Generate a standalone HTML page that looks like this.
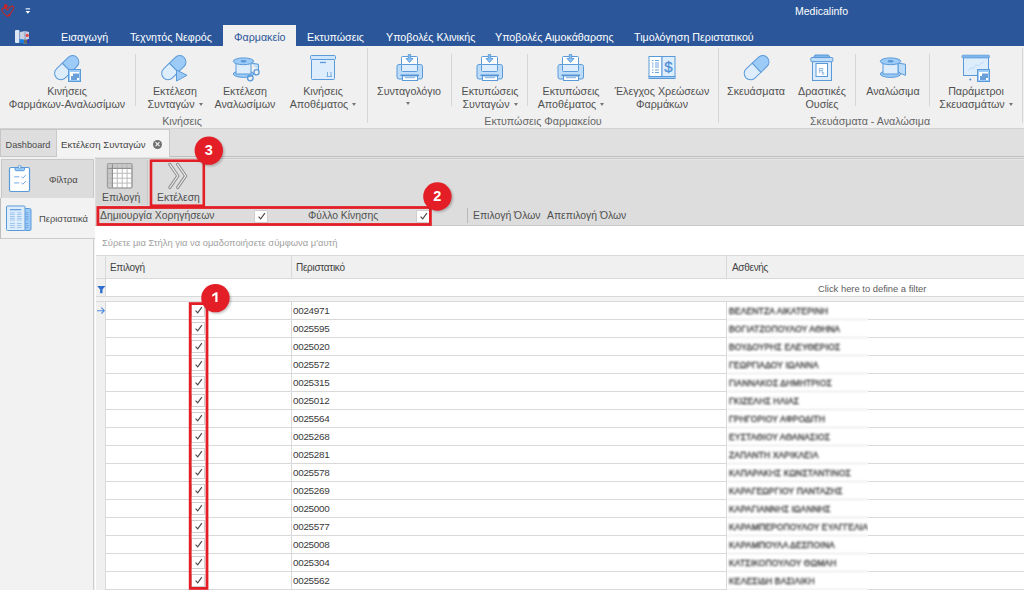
<!DOCTYPE html><html><head><meta charset="utf-8"><style>
*{margin:0;padding:0;box-sizing:border-box}
html,body{width:1024px;height:590px;overflow:hidden;background:#f0f0f0;font-family:"Liberation Sans",sans-serif;position:relative}
.a{position:absolute;white-space:nowrap}
.t{font-size:10.7px;color:#505050;line-height:12px}
.g{font-size:10.7px;color:#666;line-height:12px}
.d{font-size:9.9px;color:#3a3a3a;line-height:11px;letter-spacing:-0.3px}
.sep{position:absolute;width:1px;background:#d6d6d6}
svg{position:absolute;left:0;top:0}
.ar{display:inline-block;width:0;height:0;border-left:2.5px solid transparent;border-right:2.5px solid transparent;border-top:3px solid #777;vertical-align:middle;margin-left:4px;position:relative;top:-1px}
.cb{position:absolute;width:14px;height:13px;background:#fff;border:1px solid #cfcfcf}
.hl{position:absolute;height:1px;background:#d9d9d9}
.vl{position:absolute;width:1px;background:#d9d9d9}
</style></head><body><div class="a" style="left:0;top:0;width:1024px;height:46px;background:#2b579a"></div><div class="a" style="left:795px;top:5px;font-size:10.5px;color:#fff;line-height:12px">Medicalinfo</div><div class="a t" style="left:61px;top:31px;color:#fff">Εισαγωγή</div><div class="a t" style="left:130px;top:31px;color:#fff">Τεχνητός Νεφρός</div><div class="a t" style="left:307px;top:31px;color:#fff">Εκτυπώσεις</div><div class="a t" style="left:386px;top:31px;color:#fff">Υποβολές Κλινικής</div><div class="a t" style="left:495px;top:31px;color:#fff">Υποβολές Αιμοκάθαρσης</div><div class="a t" style="left:634px;top:31px;color:#fff">Τιμολόγηση Περιστατικού</div><div class="a" style="left:223px;top:25px;width:73px;height:22px;background:#f0f0f0"></div><div class="a t" style="left:234px;top:31px;color:#2b579a">Φαρμακείο</div><div class="a" style="left:0;top:128px;width:1024px;height:1px;background:#d2d2d2"></div><div class="a t" style="left:7px;width:120px;text-align:center;top:85px">Κινήσεις</div><div class="a t" style="left:7px;width:120px;text-align:center;top:98px">Φαρμάκων-Αναλωσίμων</div><div class="a t" style="left:115px;width:120px;text-align:center;top:85px">Εκτέλεση</div><div class="a t" style="left:115px;width:120px;text-align:center;top:98px">Συνταγών<span class="ar"></span></div><div class="a t" style="left:185px;width:120px;text-align:center;top:85px">Εκτέλεση</div><div class="a t" style="left:185px;width:120px;text-align:center;top:98px">Αναλωσίμων</div><div class="a t" style="left:263px;width:120px;text-align:center;top:85px">Κινήσεις</div><div class="a t" style="left:263px;width:120px;text-align:center;top:98px">Αποθέματος<span class="ar"></span></div><div class="a t" style="left:349px;width:120px;text-align:center;top:85px">Συνταγολόγιο</div><div class="a" style="left:406px;top:102px;width:0;height:0;border-left:2.5px solid transparent;border-right:2.5px solid transparent;border-top:3px solid #777"></div><div class="a t" style="left:430px;width:120px;text-align:center;top:85px">Εκτυπώσεις</div><div class="a t" style="left:430px;width:120px;text-align:center;top:98px">Συνταγών<span class="ar"></span></div><div class="a t" style="left:511px;width:120px;text-align:center;top:85px">Εκτυπώσεις</div><div class="a t" style="left:511px;width:120px;text-align:center;top:98px">Αποθέματος<span class="ar"></span></div><div class="a t" style="left:602px;width:120px;text-align:center;top:85px">Έλεγχος Χρεώσεων</div><div class="a t" style="left:602px;width:120px;text-align:center;top:98px">Φαρμάκων</div><div class="a t" style="left:696px;width:120px;text-align:center;top:85px">Σκευάσματα</div><div class="a t" style="left:762px;width:120px;text-align:center;top:85px">Δραστικές</div><div class="a t" style="left:762px;width:120px;text-align:center;top:98px">Ουσίες</div><div class="a t" style="left:833px;width:120px;text-align:center;top:85px">Αναλώσιμα</div><div class="a t" style="left:916px;width:120px;text-align:center;top:85px">Παράμετροι</div><div class="a t" style="left:916px;width:120px;text-align:center;top:98px">Σκευασμάτων<span class="ar"></span></div><div class="sep" style="left:135px;top:54px;height:52px"></div><div class="sep" style="left:451px;top:54px;height:52px"></div><div class="sep" style="left:527px;top:54px;height:52px"></div><div class="sep" style="left:855px;top:54px;height:52px"></div><div class="sep" style="left:929px;top:54px;height:52px"></div><div class="sep" style="left:367px;top:48px;height:75px"></div><div class="sep" style="left:718px;top:48px;height:75px"></div><div class="sep" style="left:1022px;top:48px;height:75px"></div><div class="a g" style="left:132px;width:100px;text-align:center;top:115px">Κινήσεις</div><div class="a g" style="left:443px;width:200px;text-align:center;top:115px">Εκτυπώσεις Φαρμακείου</div><div class="a g" style="left:770px;width:200px;text-align:center;top:115px">Σκευάσματα - Αναλώσιμα</div><div class="a" style="left:0;top:129px;width:1024px;height:28px;background:#e0e0e0"></div><div class="a" style="left:0;top:129px;width:57px;height:28px;background:#dedede;border:1px solid #c6c6c6"></div><div class="a" style="left:5.5px;top:139px;font-size:9.2px;color:#4a4a4a;line-height:12px">Dashboard</div><div class="a" style="left:56px;top:129px;width:114px;height:29px;background:#f3f3f3;border:1px solid #c9c9c9;border-bottom:none"></div><div class="a" style="left:61px;top:139px;font-size:9.6px;color:#444;line-height:12px">Εκτέλεση Συνταγών</div><div class="a" style="left:153px;top:139.6px;width:9px;height:9px;border-radius:50%;background:#707070"></div><div class="a" style="left:0;top:157px;width:1024px;height:433px;background:#f0f0f0"></div><div class="a" style="left:1px;top:159px;width:93px;height:40px;background:#dcdcdc;border:1px solid #c8c8c8"></div><div class="a" style="left:49px;top:173.8px;font-size:9.4px;color:#4a4a4a;line-height:12px">Φίλτρα</div><div class="a" style="left:0;top:198px;width:95px;height:41px;background:#f2f2f2;border-left:1px solid #bdbdbd;border-bottom:1px solid #cbcbcb"></div><div class="a" style="left:39px;top:212.8px;font-size:9.4px;color:#4a4a4a;line-height:12px">Περιστατικά</div><div class="a" style="left:93px;top:238px;width:1px;height:352px;background:#cfcfcf"></div><div class="a" style="left:95px;top:157px;width:1px;height:433px;background:#c2c2c2"></div><div class="a" style="left:0;top:239px;width:93px;height:351px;background:#f2f2f2"></div><div class="a" style="left:95px;top:157px;width:929px;height:69px;background:#dddddd"></div><div class="a" style="left:170px;top:156px;width:854px;height:1px;background:#bebebe"></div><div class="a" style="left:95px;top:157px;width:929px;height:1px;background:#e4e4e4"></div><div class="a" style="left:95px;top:158px;width:929px;height:1px;background:#c8c8c8"></div><div class="a" style="left:95px;top:159px;width:929px;height:1px;background:#e6e6e6"></div><div class="a" style="left:96px;top:159px;width:52px;height:46px;background:#d7d7d7"></div><div class="vl" style="left:147px;top:160px;height:45px;background:#c8c8c8"></div><div class="a t" style="left:102px;top:192px;font-size:10.4px">Επιλογή</div><div class="a t" style="left:157px;top:192px;font-size:10.4px">Εκτέλεση</div><div class="a t" style="left:100px;top:210px;font-size:10.4px">Δημιουργία Χορηγήσεων</div><div class="a t" style="left:308px;top:210px;font-size:10.4px">Φύλλο Κίνησης</div><div class="cb" style="left:254px;top:210px"></div><div class="cb" style="left:416px;top:210px"></div><div class="vl" style="left:467px;top:208px;height:15px;background:#b8b8b8"></div><div class="a t" style="left:473px;top:210px;font-size:10.4px">Επιλογή Όλων</div><div class="a t" style="left:547px;top:210px;font-size:10.4px">Απεπιλογή Όλων</div><div class="a" style="left:95px;top:225px;width:929px;height:1px;background:#c8c8c8"></div><div class="a" style="left:95px;top:226px;width:929px;height:364px;background:#fff"></div><div class="a" style="left:102px;top:237px;font-size:9.4px;color:#a0a0a0;line-height:11px">Σύρετε μια Στήλη για να ομαδοποιήσετε σύμφωνα μ'αυτή</div><div class="a" style="left:96px;top:255px;width:928px;height:24px;background:#f0f0f0;border-top:1px solid #d9d9d9;border-bottom:1px solid #d9d9d9"></div><div class="a" style="left:96px;top:279px;width:10px;height:311px;background:#f0f0f0"></div><div class="vl" style="left:105px;top:256px;height:334px"></div><div class="vl" style="left:291px;top:256px;height:22px"></div><div class="vl" style="left:726px;top:256px;height:22px"></div><div class="a" style="left:110px;top:261.5px;font-size:10px;letter-spacing:-0.3px;color:#444;line-height:11px">Επιλογή</div><div class="a" style="left:296px;top:261.5px;font-size:10px;letter-spacing:-0.3px;color:#444;line-height:11px">Περιστατικό</div><div class="a" style="left:732px;top:261.5px;font-size:10px;letter-spacing:-0.3px;color:#444;line-height:11px">Ασθενής</div><div class="a" style="left:818px;top:283px;font-size:9.4px;color:#5c5c5c;line-height:11px">Click here to define a filter</div><div class="a" style="left:96px;top:296px;width:928px;height:6px;background:#f3f3f3;border-top:1px solid #d9d9d9;border-bottom:1px solid #d9d9d9"></div><div class="hl" style="left:106px;top:319px;width:621px"></div><div class="hl" style="left:868px;top:319px;width:156px"></div><div class="a d" style="left:293px;top:304.6px">0024971</div><div class="cb" style="left:191px;top:304px"></div><div class="hl" style="left:106px;top:337px;width:621px"></div><div class="hl" style="left:868px;top:337px;width:156px"></div><div class="a d" style="left:293px;top:322.6px">0025595</div><div class="cb" style="left:191px;top:322px"></div><div class="hl" style="left:106px;top:355px;width:621px"></div><div class="hl" style="left:868px;top:355px;width:156px"></div><div class="a d" style="left:293px;top:340.6px">0025020</div><div class="cb" style="left:191px;top:340px"></div><div class="hl" style="left:106px;top:373px;width:621px"></div><div class="hl" style="left:868px;top:373px;width:156px"></div><div class="a d" style="left:293px;top:358.6px">0025572</div><div class="cb" style="left:191px;top:358px"></div><div class="hl" style="left:106px;top:391px;width:621px"></div><div class="hl" style="left:868px;top:391px;width:156px"></div><div class="a d" style="left:293px;top:376.6px">0025315</div><div class="cb" style="left:191px;top:376px"></div><div class="hl" style="left:106px;top:409px;width:621px"></div><div class="hl" style="left:868px;top:409px;width:156px"></div><div class="a d" style="left:293px;top:394.6px">0025012</div><div class="cb" style="left:191px;top:394px"></div><div class="hl" style="left:106px;top:427px;width:621px"></div><div class="hl" style="left:868px;top:427px;width:156px"></div><div class="a d" style="left:293px;top:412.6px">0025564</div><div class="cb" style="left:191px;top:412px"></div><div class="hl" style="left:106px;top:445px;width:621px"></div><div class="hl" style="left:868px;top:445px;width:156px"></div><div class="a d" style="left:293px;top:430.6px">0025268</div><div class="cb" style="left:191px;top:430px"></div><div class="hl" style="left:106px;top:463px;width:621px"></div><div class="hl" style="left:868px;top:463px;width:156px"></div><div class="a d" style="left:293px;top:448.6px">0025281</div><div class="cb" style="left:191px;top:448px"></div><div class="hl" style="left:106px;top:481px;width:621px"></div><div class="hl" style="left:868px;top:481px;width:156px"></div><div class="a d" style="left:293px;top:466.6px">0025578</div><div class="cb" style="left:191px;top:466px"></div><div class="hl" style="left:106px;top:499px;width:621px"></div><div class="hl" style="left:868px;top:499px;width:156px"></div><div class="a d" style="left:293px;top:484.6px">0025269</div><div class="cb" style="left:191px;top:484px"></div><div class="hl" style="left:106px;top:517px;width:621px"></div><div class="hl" style="left:868px;top:517px;width:156px"></div><div class="a d" style="left:293px;top:502.6px">0025000</div><div class="cb" style="left:191px;top:502px"></div><div class="hl" style="left:106px;top:535px;width:621px"></div><div class="hl" style="left:868px;top:535px;width:156px"></div><div class="a d" style="left:293px;top:520.6px">0025577</div><div class="cb" style="left:191px;top:520px"></div><div class="hl" style="left:106px;top:553px;width:621px"></div><div class="hl" style="left:868px;top:553px;width:156px"></div><div class="a d" style="left:293px;top:538.6px">0025008</div><div class="cb" style="left:191px;top:538px"></div><div class="hl" style="left:106px;top:571px;width:621px"></div><div class="hl" style="left:868px;top:571px;width:156px"></div><div class="a d" style="left:293px;top:556.6px">0025304</div><div class="cb" style="left:191px;top:556px"></div><div class="hl" style="left:106px;top:589px;width:621px"></div><div class="hl" style="left:868px;top:589px;width:156px"></div><div class="a d" style="left:293px;top:574.6px">0025562</div><div class="cb" style="left:191px;top:574px"></div><div class="vl" style="left:291px;top:302px;height:288px"></div><div class="vl" style="left:726px;top:302px;height:288px"></div><div class="a" style="left:727px;top:302px;width:141px;height:288px;overflow:hidden;background:#fff"><div style="position:absolute;left:0;top:0;width:160px;height:300px;filter:blur(1.25px)"><div style="position:absolute;left:0;top:17px;width:160px;height:1px;background:#e0e0e0"></div><div style="position:absolute;left:2px;top:4px;font-size:8.5px;line-height:11px;color:#333;white-space:nowrap;letter-spacing:0.15px;-webkit-text-stroke:0.3px #333">ΒΕΛΕΝΤΖΑ ΑΙΚΑΤΕΡΙΝΗ</div><div style="position:absolute;left:0;top:35px;width:160px;height:1px;background:#e0e0e0"></div><div style="position:absolute;left:2px;top:22px;font-size:8.5px;line-height:11px;color:#333;white-space:nowrap;letter-spacing:0.15px;-webkit-text-stroke:0.3px #333">ΒΟΓΙΑΤΖΟΠΟΥΛΟΥ ΑΘΗΝΑ</div><div style="position:absolute;left:0;top:53px;width:160px;height:1px;background:#e0e0e0"></div><div style="position:absolute;left:2px;top:40px;font-size:8.5px;line-height:11px;color:#333;white-space:nowrap;letter-spacing:0.15px;-webkit-text-stroke:0.3px #333">ΒΟΥΔΟΥΡΗΣ ΕΛΕΥΘΕΡΙΟΣ</div><div style="position:absolute;left:0;top:71px;width:160px;height:1px;background:#e0e0e0"></div><div style="position:absolute;left:2px;top:58px;font-size:8.5px;line-height:11px;color:#333;white-space:nowrap;letter-spacing:0.15px;-webkit-text-stroke:0.3px #333">ΓΕΩΡΓΙΑΔΟΥ ΙΩΑΝΝΑ</div><div style="position:absolute;left:0;top:89px;width:160px;height:1px;background:#e0e0e0"></div><div style="position:absolute;left:2px;top:76px;font-size:8.5px;line-height:11px;color:#333;white-space:nowrap;letter-spacing:0.15px;-webkit-text-stroke:0.3px #333">ΓΙΑΝΝΑΚΟΣ ΔΗΜΗΤΡΙΟΣ</div><div style="position:absolute;left:0;top:107px;width:160px;height:1px;background:#e0e0e0"></div><div style="position:absolute;left:2px;top:94px;font-size:8.5px;line-height:11px;color:#333;white-space:nowrap;letter-spacing:0.15px;-webkit-text-stroke:0.3px #333">ΓΚΙΖΕΛΗΣ ΗΛΙΑΣ</div><div style="position:absolute;left:0;top:125px;width:160px;height:1px;background:#e0e0e0"></div><div style="position:absolute;left:2px;top:112px;font-size:8.5px;line-height:11px;color:#333;white-space:nowrap;letter-spacing:0.15px;-webkit-text-stroke:0.3px #333">ΓΡΗΓΟΡΙΟΥ ΑΦΡΟΔΙΤΗ</div><div style="position:absolute;left:0;top:143px;width:160px;height:1px;background:#e0e0e0"></div><div style="position:absolute;left:2px;top:130px;font-size:8.5px;line-height:11px;color:#333;white-space:nowrap;letter-spacing:0.15px;-webkit-text-stroke:0.3px #333">ΕΥΣΤΑΘΙΟΥ ΑΘΑΝΑΣΙΟΣ</div><div style="position:absolute;left:0;top:161px;width:160px;height:1px;background:#e0e0e0"></div><div style="position:absolute;left:2px;top:148px;font-size:8.5px;line-height:11px;color:#333;white-space:nowrap;letter-spacing:0.15px;-webkit-text-stroke:0.3px #333">ΖΑΠΑΝΤΗ ΧΑΡΙΚΛΕΙΑ</div><div style="position:absolute;left:0;top:179px;width:160px;height:1px;background:#e0e0e0"></div><div style="position:absolute;left:2px;top:166px;font-size:8.5px;line-height:11px;color:#333;white-space:nowrap;letter-spacing:0.15px;-webkit-text-stroke:0.3px #333">ΚΑΠΑΡΑΚΗΣ ΚΩΝΣΤΑΝΤΙΝΟΣ</div><div style="position:absolute;left:0;top:197px;width:160px;height:1px;background:#e0e0e0"></div><div style="position:absolute;left:2px;top:184px;font-size:8.5px;line-height:11px;color:#333;white-space:nowrap;letter-spacing:0.15px;-webkit-text-stroke:0.3px #333">ΚΑΡΑΓΕΩΡΓΙΟΥ ΠΑΝΤΑΖΗΣ</div><div style="position:absolute;left:0;top:215px;width:160px;height:1px;background:#e0e0e0"></div><div style="position:absolute;left:2px;top:202px;font-size:8.5px;line-height:11px;color:#333;white-space:nowrap;letter-spacing:0.15px;-webkit-text-stroke:0.3px #333">ΚΑΡΑΓΙΑΝΝΗΣ ΙΩΑΝΝΗΣ</div><div style="position:absolute;left:0;top:233px;width:160px;height:1px;background:#e0e0e0"></div><div style="position:absolute;left:2px;top:220px;font-size:8.5px;line-height:11px;color:#333;white-space:nowrap;letter-spacing:0.15px;-webkit-text-stroke:0.3px #333">ΚΑΡΑΜΠΕΡΟΠΟΥΛΟΥ ΕΥΑΓΓΕΛΙΑ</div><div style="position:absolute;left:0;top:251px;width:160px;height:1px;background:#e0e0e0"></div><div style="position:absolute;left:2px;top:238px;font-size:8.5px;line-height:11px;color:#333;white-space:nowrap;letter-spacing:0.15px;-webkit-text-stroke:0.3px #333">ΚΑΡΑΜΠΟΥΛΑ ΔΕΣΠΟΙΝΑ</div><div style="position:absolute;left:0;top:269px;width:160px;height:1px;background:#e0e0e0"></div><div style="position:absolute;left:2px;top:256px;font-size:8.5px;line-height:11px;color:#333;white-space:nowrap;letter-spacing:0.15px;-webkit-text-stroke:0.3px #333">ΚΑΤΣΙΚΟΠΟΥΛΟΥ ΘΩΜΑΗ</div><div style="position:absolute;left:0;top:287px;width:160px;height:1px;background:#e0e0e0"></div><div style="position:absolute;left:2px;top:274px;font-size:8.5px;line-height:11px;color:#333;white-space:nowrap;letter-spacing:0.15px;-webkit-text-stroke:0.3px #333">ΚΕΛΕΣΙΔΗ ΒΑΣΙΛΙΚΗ</div></div></div><svg width="1024" height="590" viewBox="0 0 1024 590"><defs><filter id="bl" x="-50%" y="-50%" width="200%" height="200%"><feGaussianBlur stdDeviation="1.2"/></filter></defs><g transform="translate(66.75,67.65) rotate(-44.50608310138127)"><path d="M0,-6.3 H-8.20274344350718 A6.3,6.3 0 0 0 -8.20274344350718,6.3 H0 Z" fill="#ddedfc" stroke="#5b9ad9" stroke-width="1"/><path d="M0,-6.3 H8.20274344350718 A6.3,6.3 0 0 1 8.20274344350718,6.3 H0 Z" fill="#9dcbf7" stroke="#5b9ad9" stroke-width="1"/></g><rect x="68.5" y="69.5" width="12" height="12" fill="#9dcbf7" stroke="#5b9ad9"/><rect x="70" y="72" width="9" height="8" fill="#fff"/><path d="M71,80 V76 H73 V73.5 H79 V78 H77 V80 Z" fill="#6a9fd8"/><g transform="translate(173.85,67.65) rotate(-44.50608310138129)"><path d="M0,-6.3 H-8.202743443507178 A6.3,6.3 0 0 0 -8.202743443507178,6.3 H0 Z" fill="#ddedfc" stroke="#5b9ad9" stroke-width="1"/><path d="M0,-6.3 H8.202743443507178 A6.3,6.3 0 0 1 8.202743443507178,6.3 H0 Z" fill="#9dcbf7" stroke="#5b9ad9" stroke-width="1"/></g><path d="M176.5,70 L187,75.3 L176.5,81 Z" fill="#9dcbf7" stroke="#5b9ad9" stroke-linejoin="round"/><ellipse cx="243.5" cy="74" rx="10.2" ry="3.4" fill="#9dcbf7" stroke="#5b9ad9"/><rect x="236.0" y="61" width="15" height="13" fill="#ddedfc" stroke="#5b9ad9"/><ellipse cx="243.5" cy="61.3" rx="10.2" ry="3.4" fill="#9dcbf7" stroke="#5b9ad9"/><ellipse cx="243.5" cy="61.3" rx="3" ry="1.2" fill="#5a98d8"/><path d="M251.0,63 L258.5,64.3 L258.5,70" fill="#bcdcfa" stroke="#5b9ad9"/><circle cx="256.5" cy="72.3" r="2.6" fill="none" stroke="#5b9ad9" stroke-width="1.3"/><circle cx="250.3" cy="78" r="2.8" fill="none" stroke="#5b9ad9" stroke-width="1.3"/><rect x="311.5" y="59.5" width="23" height="20" rx="1" fill="#ddedfc" stroke="#5b9ad9"/><rect x="310.5" y="55.5" width="25" height="4" rx="1" fill="#cfe5fb" stroke="#5b9ad9"/><line x1="320" y1="62.5" x2="326" y2="62.5" stroke="#5b9ad9" stroke-width="1.3"/><path d="M327.5,76 V72 M331,76 V72 M326.5,76.5 H332" stroke="#5b9ad9" stroke-width="0.8" fill="none"/><rect x="401.5" y="56.5" width="16" height="15" rx="1" fill="#fff" stroke="#5b9ad9"/><rect x="397" y="64.5" width="25.5" height="14.5" rx="2" fill="#bcdcfa" stroke="#5b9ad9"/><rect x="401.5" y="64.5" width="16" height="7" rx="1" fill="#ddedfc" stroke="#5b9ad9"/><line x1="400.5" y1="75.3" x2="419" y2="75.3" stroke="#4f8fd3" stroke-width="1.5"/><rect x="402.5" y="76" width="15" height="4.5" fill="#fff" stroke="#5b9ad9"/><line x1="405" y1="77.7" x2="415" y2="77.7" stroke="#5b9ad9" stroke-width="0.8"/><path d="M408.3,54.5 H410.7 V58.5 H413 L409.5,62.5 L406,58.5 H408.3 Z" fill="#8cc0f2" stroke="#5b9ad9" stroke-width="0.9" stroke-linejoin="round"/><rect x="481.5" y="56.5" width="16" height="15" rx="1" fill="#fff" stroke="#5b9ad9"/><rect x="477" y="64.5" width="25.5" height="14.5" rx="2" fill="#bcdcfa" stroke="#5b9ad9"/><rect x="481.5" y="64.5" width="16" height="7" rx="1" fill="#ddedfc" stroke="#5b9ad9"/><line x1="480.5" y1="75.3" x2="499" y2="75.3" stroke="#4f8fd3" stroke-width="1.5"/><rect x="482.5" y="76" width="15" height="4.5" fill="#fff" stroke="#5b9ad9"/><line x1="485" y1="77.7" x2="495" y2="77.7" stroke="#5b9ad9" stroke-width="0.8"/><path d="M488.3,54.5 H490.7 V58.5 H493 L489.5,62.5 L486,58.5 H488.3 Z" fill="#8cc0f2" stroke="#5b9ad9" stroke-width="0.9" stroke-linejoin="round"/><rect x="562.5" y="56.5" width="16" height="15" rx="1" fill="#fff" stroke="#5b9ad9"/><rect x="558" y="64.5" width="25.5" height="14.5" rx="2" fill="#bcdcfa" stroke="#5b9ad9"/><rect x="562.5" y="64.5" width="16" height="7" rx="1" fill="#ddedfc" stroke="#5b9ad9"/><line x1="561.5" y1="75.3" x2="580" y2="75.3" stroke="#4f8fd3" stroke-width="1.5"/><rect x="563.5" y="76" width="15" height="4.5" fill="#fff" stroke="#5b9ad9"/><line x1="566" y1="77.7" x2="576" y2="77.7" stroke="#5b9ad9" stroke-width="0.8"/><path d="M569.3,54.5 H571.7 V58.5 H574 L570.5,62.5 L567,58.5 H569.3 Z" fill="#8cc0f2" stroke="#5b9ad9" stroke-width="0.9" stroke-linejoin="round"/><rect x="649" y="56.5" width="13" height="20" fill="#fff" stroke="#5b9ad9"/><rect x="662" y="56.5" width="13" height="20" fill="#ddedfc" stroke="#5b9ad9"/><rect x="649" y="76.5" width="26" height="2" fill="#9dcbf7" stroke="#5b9ad9"/><line x1="652" y1="60.5" x2="653.5" y2="60.5" stroke="#6ea6e0" stroke-width="1"/><line x1="655" y1="60.5" x2="659" y2="60.5" stroke="#6ea6e0" stroke-width="1"/><line x1="652" y1="63" x2="653.5" y2="63" stroke="#6ea6e0" stroke-width="1"/><line x1="655" y1="63" x2="659" y2="63" stroke="#6ea6e0" stroke-width="1"/><line x1="652" y1="65" x2="653.5" y2="65" stroke="#6ea6e0" stroke-width="1"/><line x1="655" y1="65" x2="659" y2="65" stroke="#6ea6e0" stroke-width="1"/><line x1="652" y1="67" x2="653.5" y2="67" stroke="#6ea6e0" stroke-width="1"/><line x1="655" y1="67" x2="659" y2="67" stroke="#6ea6e0" stroke-width="1"/><line x1="652" y1="70" x2="653.5" y2="70" stroke="#6ea6e0" stroke-width="1"/><line x1="655" y1="70" x2="659" y2="70" stroke="#6ea6e0" stroke-width="1"/><line x1="652" y1="72.5" x2="653.5" y2="72.5" stroke="#6ea6e0" stroke-width="1"/><line x1="655" y1="72.5" x2="659" y2="72.5" stroke="#6ea6e0" stroke-width="1"/><text x="668.5" y="72" font-family="Liberation Sans" font-size="15" fill="#4f8fd3" stroke="#4f8fd3" stroke-width="0.3" text-anchor="middle">$</text><g transform="translate(756.6,67.7) rotate(-43.55587446906405)"><path d="M0,-6.3 H-8.417244204607604 A6.3,6.3 0 0 0 -8.417244204607604,6.3 H0 Z" fill="#ddedfc" stroke="#5b9ad9" stroke-width="1"/><path d="M0,-6.3 H8.417244204607604 A6.3,6.3 0 0 1 8.417244204607604,6.3 H0 Z" fill="#9dcbf7" stroke="#5b9ad9" stroke-width="1"/></g><rect x="812.5" y="61.5" width="19" height="19" fill="#ddedfc" stroke="#5b9ad9"/><rect x="816" y="63.5" width="11.5" height="13" fill="#fff" stroke="#5b9ad9"/><path d="M813.5,57.5 L815,55 H828.5 L830,57.5 Z" fill="#7fb6ee" stroke="#5b9ad9"/><rect x="810.8" y="57.5" width="22" height="4.2" rx="1" fill="#bcdcfa" stroke="#5b9ad9"/><text x="818.5" y="72.5" font-family="Liberation Sans" font-size="7" fill="#5a98d8">R</text><text x="821.5" y="75" font-family="Liberation Sans" font-size="5.5" fill="#5a98d8">x</text><path d="M898.0,63 L905.5,64.3 L905.5,75.3 L898.0,72.6 Z" fill="#bcdcfa" stroke="#5b9ad9"/><ellipse cx="890.5" cy="74" rx="10.2" ry="3.4" fill="#9dcbf7" stroke="#5b9ad9"/><rect x="883.0" y="61" width="15" height="13" fill="#ddedfc" stroke="#5b9ad9"/><ellipse cx="890.5" cy="61.3" rx="10.2" ry="3.4" fill="#9dcbf7" stroke="#5b9ad9"/><ellipse cx="890.5" cy="61.3" rx="3" ry="1.2" fill="#5a98d8"/><rect x="963.5" y="57.5" width="25" height="18" fill="#ddedfc" stroke="#5b9ad9"/><rect x="962" y="55.2" width="27.5" height="2.7" rx="1" fill="#7fb6ee" stroke="#5b9ad9" stroke-width="0.8"/><polyline points="968,71 971,67.5 973,69 976,64.5 978,66 981,63.5 984,62" fill="none" stroke="#b5d4f2" stroke-width="0.8"/><circle cx="970.3" cy="79.6" r="1" fill="#4f8fd3"/><rect x="977.5" y="69.5" width="12" height="12" fill="#9dcbf7" stroke="#5b9ad9"/><rect x="979" y="72" width="9" height="8" fill="#fff"/><path d="M980,80 V76 H982 V73.5 H988 V78 H986 V80 Z" fill="#6a9fd8"/><path d="M7.5,16.5 C3,13 1,10.5 2,9 C3,7.5 5.5,8 7.5,10 C9,6.5 12.5,5 13.5,7 C14.5,9 11,13 7.5,16.5 Z" fill="none" stroke="#c0282a" stroke-width="1.1"/><ellipse cx="5.7" cy="6.3" rx="1.9" ry="2.3" fill="#c0282a"/><circle cx="9.2" cy="15.2" r="1.2" fill="#c0282a"/><rect x="25.6" y="8" width="4.5" height="1.6" fill="#b8c8e4"/><path d="M25.5,11 H30.2 L27.85,13.8 Z" fill="#fff"/><rect x="15" y="30" width="4.5" height="13" rx="1" fill="#dde6f4"/><path d="M20,32 L25,31 L29,32 V43 L24,43.5 L20,42 Z" fill="#c8d2e2"/><path d="M19.5,39 L24,39.5 V43.5 L19.5,42.3 Z" fill="#1a7ee0"/><path d="M24,39.5 L27,39.5 V43.5 H24 Z" fill="#6b6a5a"/><path d="M27,39.5 L29,39 V43 L27,43.5 Z" fill="#2a3ab8"/><circle cx="27.2" cy="35.4" r="1.7" fill="#e84848"/><line x1="25" y1="30.5" x2="25" y2="39" stroke="#5a78b8" stroke-width="0.6"/><rect x="9.5" y="167.5" width="20" height="24" rx="1.5" fill="#fff" stroke="#5b9ad9" stroke-width="1.2"/><path d="M15,167.5 H24.5 V169.5 Q24.5,170.7 23.3,170.7 H16.2 Q15,170.7 15,169.5 Z" fill="#9dcbf7" stroke="#5b9ad9"/><circle cx="19.6" cy="166.8" r="1.4" fill="#fff" stroke="#5b9ad9"/><line x1="14.2" y1="176.8" x2="19.3" y2="176.8" stroke="#8ab8e8" stroke-width="1.2"/><polyline points="21.4,176.8 22.8,178.10000000000002 25.8,175.10000000000002" fill="none" stroke="#6ea6e0" stroke-width="1"/><line x1="14.2" y1="182.9" x2="19.3" y2="182.9" stroke="#8ab8e8" stroke-width="1.2"/><polyline points="21.4,182.9 22.8,184.20000000000002 25.8,181.20000000000002" fill="none" stroke="#6ea6e0" stroke-width="1"/><rect x="24" y="208.5" width="7" height="22" rx="1.5" fill="#9dcbf7" stroke="#5b9ad9"/><rect x="6.5" y="206" width="18.5" height="24.5" rx="1" fill="#ddedfc" stroke="#5b9ad9"/><line x1="10" y1="209.7" x2="21.2" y2="209.7" stroke="#5a98d8" stroke-width="1.2"/><line x1="10" y1="212.8" x2="14.8" y2="212.8" stroke="#98c2ec" stroke-width="0.9"/><line x1="17" y1="212.8" x2="21.5" y2="212.8" stroke="#98c2ec" stroke-width="0.9"/><line x1="25.5" y1="212.8" x2="28.5" y2="212.8" stroke="#6ea6e0" stroke-width="0.9"/><line x1="10" y1="214.5" x2="14.8" y2="214.5" stroke="#98c2ec" stroke-width="0.9"/><line x1="17" y1="214.5" x2="21.5" y2="214.5" stroke="#98c2ec" stroke-width="0.9"/><line x1="25.5" y1="214.5" x2="28.5" y2="214.5" stroke="#6ea6e0" stroke-width="0.9"/><line x1="10" y1="216.5" x2="14.8" y2="216.5" stroke="#98c2ec" stroke-width="0.9"/><line x1="17" y1="216.5" x2="21.5" y2="216.5" stroke="#98c2ec" stroke-width="0.9"/><line x1="25.5" y1="216.5" x2="28.5" y2="216.5" stroke="#6ea6e0" stroke-width="0.9"/><line x1="10" y1="218.3" x2="14.8" y2="218.3" stroke="#98c2ec" stroke-width="0.9"/><line x1="17" y1="218.3" x2="21.5" y2="218.3" stroke="#98c2ec" stroke-width="0.9"/><line x1="25.5" y1="218.3" x2="28.5" y2="218.3" stroke="#6ea6e0" stroke-width="0.9"/><line x1="10" y1="220" x2="14.8" y2="220" stroke="#98c2ec" stroke-width="0.9"/><line x1="17" y1="220" x2="21.5" y2="220" stroke="#98c2ec" stroke-width="0.9"/><line x1="25.5" y1="220" x2="28.5" y2="220" stroke="#6ea6e0" stroke-width="0.9"/><line x1="10" y1="223.5" x2="14.8" y2="223.5" stroke="#98c2ec" stroke-width="0.9"/><line x1="17" y1="223.5" x2="21.5" y2="223.5" stroke="#98c2ec" stroke-width="0.9"/><line x1="25.5" y1="223.5" x2="28.5" y2="223.5" stroke="#6ea6e0" stroke-width="0.9"/><line x1="10" y1="225.5" x2="14.8" y2="225.5" stroke="#98c2ec" stroke-width="0.9"/><line x1="17" y1="225.5" x2="21.5" y2="225.5" stroke="#98c2ec" stroke-width="0.9"/><line x1="25.5" y1="225.5" x2="28.5" y2="225.5" stroke="#6ea6e0" stroke-width="0.9"/><line x1="10" y1="227.5" x2="14.8" y2="227.5" stroke="#98c2ec" stroke-width="0.9"/><line x1="17" y1="227.5" x2="21.5" y2="227.5" stroke="#98c2ec" stroke-width="0.9"/><line x1="25.5" y1="227.5" x2="28.5" y2="227.5" stroke="#6ea6e0" stroke-width="0.9"/><rect x="107.5" y="163.5" width="24.5" height="24.5" rx="1.5" fill="#fff" stroke="#a9a9a9" stroke-width="1.2"/><rect x="107.5" y="163.5" width="24.5" height="5" fill="#c8c8c8"/><rect x="107.5" y="163.5" width="5" height="24.5" fill="#c8c8c8"/><line x1="112.4" y1="163.5" x2="112.4" y2="188" stroke="#b4b4b4" stroke-width="0.9"/><line x1="107.5" y1="168.4" x2="132" y2="168.4" stroke="#b4b4b4" stroke-width="0.9"/><line x1="117.3" y1="163.5" x2="117.3" y2="188" stroke="#b4b4b4" stroke-width="0.9"/><line x1="107.5" y1="173.3" x2="132" y2="173.3" stroke="#b4b4b4" stroke-width="0.9"/><line x1="122.2" y1="163.5" x2="122.2" y2="188" stroke="#b4b4b4" stroke-width="0.9"/><line x1="107.5" y1="178.2" x2="132" y2="178.2" stroke="#b4b4b4" stroke-width="0.9"/><line x1="127.1" y1="163.5" x2="127.1" y2="188" stroke="#b4b4b4" stroke-width="0.9"/><line x1="107.5" y1="183.1" x2="132" y2="183.1" stroke="#b4b4b4" stroke-width="0.9"/><line x1="112.4" y1="163.5" x2="112.4" y2="188" stroke="#8c8c8c" stroke-width="1"/><line x1="107.5" y1="168.4" x2="132" y2="168.4" stroke="#8c8c8c" stroke-width="1"/><rect x="107.5" y="163.5" width="24.5" height="24.5" rx="1.5" fill="none" stroke="#a0a0a0" stroke-width="1.2"/><polyline points="169.8,164.3 177.8,176 169.8,187.5" fill="none" stroke="#8c8c8c" stroke-width="3.1" stroke-linejoin="miter" stroke-linecap="round"/><polyline points="169.8,164.3 177.8,176 169.8,187.5" fill="none" stroke="#ededed" stroke-width="1.2" stroke-linejoin="miter" stroke-linecap="round"/><polyline points="177.60000000000002,164.3 185.60000000000002,176 177.60000000000002,187.5" fill="none" stroke="#8c8c8c" stroke-width="3.1" stroke-linejoin="miter" stroke-linecap="round"/><polyline points="177.60000000000002,164.3 185.60000000000002,176 177.60000000000002,187.5" fill="none" stroke="#ededed" stroke-width="1.2" stroke-linejoin="miter" stroke-linecap="round"/><path d="M155.5,142.1 L159.5,146.1 M159.5,142.1 L155.5,146.1" stroke="#f0f0f0" stroke-width="1.2"/><polyline points="258.6,216.6 260.7,218.9 264.9,213.1" fill="none" stroke="#4a4a4a" stroke-width="1.15"/><polyline points="420.6,216.6 422.7,218.9 426.9,213.1" fill="none" stroke="#4a4a4a" stroke-width="1.15"/><polyline points="195.6,310.6 197.7,312.9 201.9,307.1" fill="none" stroke="#4a4a4a" stroke-width="1.15"/><polyline points="195.6,328.6 197.7,330.9 201.9,325.1" fill="none" stroke="#4a4a4a" stroke-width="1.15"/><polyline points="195.6,346.6 197.7,348.9 201.9,343.1" fill="none" stroke="#4a4a4a" stroke-width="1.15"/><polyline points="195.6,364.6 197.7,366.9 201.9,361.1" fill="none" stroke="#4a4a4a" stroke-width="1.15"/><polyline points="195.6,382.6 197.7,384.9 201.9,379.1" fill="none" stroke="#4a4a4a" stroke-width="1.15"/><polyline points="195.6,400.6 197.7,402.9 201.9,397.1" fill="none" stroke="#4a4a4a" stroke-width="1.15"/><polyline points="195.6,418.6 197.7,420.9 201.9,415.1" fill="none" stroke="#4a4a4a" stroke-width="1.15"/><polyline points="195.6,436.6 197.7,438.9 201.9,433.1" fill="none" stroke="#4a4a4a" stroke-width="1.15"/><polyline points="195.6,454.6 197.7,456.9 201.9,451.1" fill="none" stroke="#4a4a4a" stroke-width="1.15"/><polyline points="195.6,472.6 197.7,474.9 201.9,469.1" fill="none" stroke="#4a4a4a" stroke-width="1.15"/><polyline points="195.6,490.6 197.7,492.9 201.9,487.1" fill="none" stroke="#4a4a4a" stroke-width="1.15"/><polyline points="195.6,508.6 197.7,510.9 201.9,505.1" fill="none" stroke="#4a4a4a" stroke-width="1.15"/><polyline points="195.6,526.6 197.7,528.9 201.9,523.1" fill="none" stroke="#4a4a4a" stroke-width="1.15"/><polyline points="195.6,544.6 197.7,546.9 201.9,541.1" fill="none" stroke="#4a4a4a" stroke-width="1.15"/><polyline points="195.6,562.6 197.7,564.9 201.9,559.1" fill="none" stroke="#4a4a4a" stroke-width="1.15"/><polyline points="195.6,580.6 197.7,582.9 201.9,577.1" fill="none" stroke="#4a4a4a" stroke-width="1.15"/><path d="M97.2,286 H105.4 L102.5,289.5 V293.3 L100.1,293.3 V289.5 Z" fill="#2f6fce"/><path d="M97,310.7 H104.3 M101.3,307.7 L104.3,310.7 L101.3,313.7" fill="none" stroke="#4a8ae0" stroke-width="1.1"/><rect x="151" y="160.7" width="52.8" height="45" fill="none" stroke="#e41e26" stroke-width="2.6"/><rect x="97.9" y="207.5" width="332.5" height="17" fill="none" stroke="#e41e26" stroke-width="2.8"/><rect x="190.2" y="303.6" width="16.8" height="284.8" fill="none" stroke="#e41e26" stroke-width="2.8"/><circle cx="210.3" cy="152.1" r="14.2" fill="#000" opacity="0.22" filter="url(#bl)"/><circle cx="208.8" cy="150.6" r="14.2" fill="#e41e26"/><text x="208.8" y="155.4" font-family="Liberation Sans" font-weight="bold" font-size="14.5" fill="#fff" text-anchor="middle">3</text><circle cx="438.9" cy="198.0" r="14.2" fill="#000" opacity="0.22" filter="url(#bl)"/><circle cx="437.4" cy="196.5" r="14.2" fill="#e41e26"/><text x="437.4" y="201.3" font-family="Liberation Sans" font-weight="bold" font-size="14.5" fill="#fff" text-anchor="middle">2</text><circle cx="216.95" cy="299.6" r="14.2" fill="#000" opacity="0.22" filter="url(#bl)"/><circle cx="215.45" cy="298.1" r="14.2" fill="#e41e26"/><text x="215.45" y="302.90000000000003" font-family="Liberation Sans" font-weight="bold" font-size="14.5" fill="#fff" text-anchor="middle"></text><path d="M212.2,294.6 L215.9,292.3 H217.5 V302.1 H215.3 V295.1 L212.2,296.8 Z" fill="#fff"/></svg></body></html>
